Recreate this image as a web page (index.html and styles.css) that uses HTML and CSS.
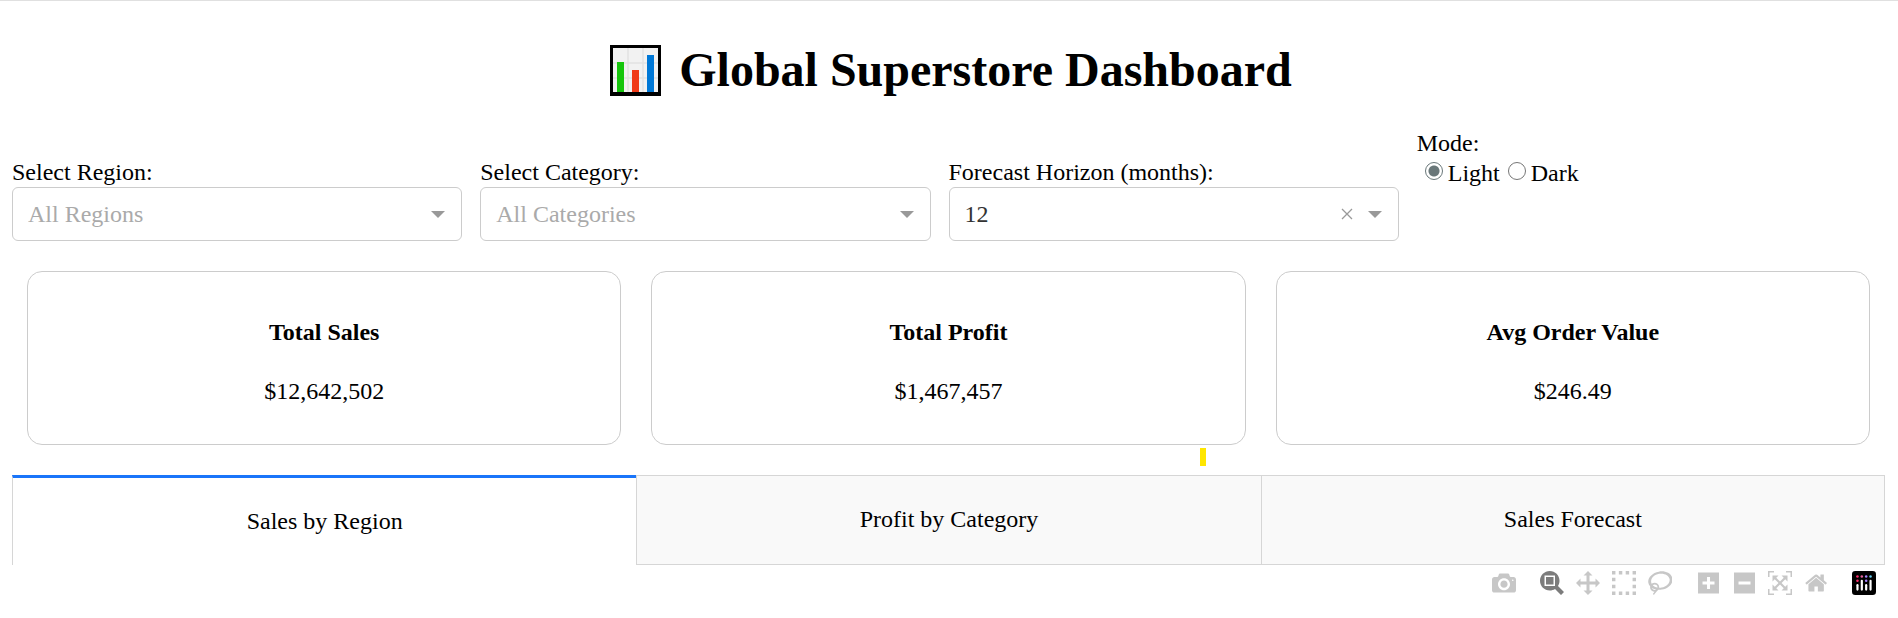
FILE: index.html
```html
<!DOCTYPE html>
<html lang="en">
<head>
<meta charset="utf-8">
<meta name="viewport" content="width=device-width, initial-scale=1">
<title>Global Superstore Dashboard</title>
<link rel="stylesheet" href="styles.css">
</head>
<body>
<main class="page">
  <h1 class="title">
    <svg class="title-icon" viewBox="0 0 51 51" aria-hidden="true">
      <rect width="51" height="51" fill="#000"/>
      <rect x="3" y="3" width="45" height="44" fill="#f2f2f2"/>
      <path d="M18 3V47M33 3V47M3 18H48M3 33H48" stroke="#e2e2e2" stroke-width="1.5"/>
      <rect x="7" y="17" width="7" height="30" fill="#16c60c"/>
      <rect x="22" y="25" width="7" height="22" fill="#f03a17"/>
      <rect x="37" y="10" width="7" height="37" fill="#0078d7"/>
    </svg>
    <span>Global Superstore Dashboard</span>
  </h1>

  <form class="filters">
    <div class="field">
      <label for="region">Select Region:</label>
      <div class="select-box">
        <select id="region" class="placeholder"><option>All Regions</option></select>
        <svg class="arrow" viewBox="0 0 14 7" aria-hidden="true"><path d="M0 0H14L7 7Z"/></svg>
      </div>
    </div>
    <div class="field">
      <label for="category">Select Category:</label>
      <div class="select-box">
        <select id="category" class="placeholder"><option>All Categories</option></select>
        <svg class="arrow" viewBox="0 0 14 7" aria-hidden="true"><path d="M0 0H14L7 7Z"/></svg>
      </div>
    </div>
    <div class="field">
      <label for="horizon">Forecast Horizon (months):</label>
      <div class="select-box">
        <select id="horizon"><option>12</option></select>
        <button type="button" class="clear" aria-label="Clear value"><svg viewBox="0 0 12 12" aria-hidden="true"><path d="M1 1L11 11M11 1L1 11"/></svg></button>
        <svg class="arrow" viewBox="0 0 14 7" aria-hidden="true"><path d="M0 0H14L7 7Z"/></svg>
      </div>
    </div>
    <fieldset class="field mode">
      <legend>Mode:</legend>
      <div class="radios">
        <label><input type="radio" name="mode" checked>Light</label>
        <label><input type="radio" name="mode">Dark</label>
      </div>
    </fieldset>
  </form>

  <section class="cards">
    <article class="card"><h2>Total Sales</h2><p>$12,642,502</p></article>
    <article class="card"><h2>Total Profit</h2><p>$1,467,457</p><span class="marker"></span></article>
    <article class="card"><h2>Avg Order Value</h2><p>$246.49</p></article>
  </section>

  <div class="tabs" role="tablist">
    <button type="button" class="tab selected" role="tab" aria-selected="true">Sales by Region</button>
    <button type="button" class="tab" role="tab" aria-selected="false">Profit by Category</button>
    <button type="button" class="tab" role="tab" aria-selected="false">Sales Forecast</button>
  </div>

  <div class="modebar">
    <div class="group">
      <button type="button" aria-label="Download plot as a png"><svg viewBox="0 0 1000 1000"><path transform="matrix(1 0 0 -1 0 850)" d="m500 450c-83 0-150-67-150-150 0-83 67-150 150-150 83 0 150 67 150 150 0 83-67 150-150 150z m400 150h-120c-16 0-34 13-39 29l-31 93c-6 15-23 28-40 28h-340c-16 0-34-13-39-28l-31-94c-6-15-23-28-40-28h-120c-55 0-100-45-100-100v-450c0-55 45-100 100-100h800c55 0 100 45 100 100v450c0 55-45 100-100 100z m-400-550c-138 0-250 112-250 250 0 138 112 250 250 250 138 0 250-112 250-250 0-138-112-250-250-250z m365 380c-19 0-35 16-35 35 0 19 16 35 35 35 19 0 35-16 35-35 0-19-16-35-35-35z"/></svg></button>
    </div>
    <div class="group">
      <button type="button" class="active" aria-label="Zoom"><svg viewBox="0 0 1000 1000"><path transform="matrix(1 0 0 -1 0 850)" d="m1000-25l-250 251c40 63 63 138 63 218 0 224-182 406-407 406-224 0-406-182-406-406s183-406 407-406c80 0 155 22 218 62l250-250 125 125z m-812 250l0 438 437 0 0-438-437 0z m62 375l313 0 0-312-313 0 0 312z"/></svg></button>
      <button type="button" aria-label="Pan"><svg viewBox="0 0 1000 1000"><path transform="matrix(1 0 0 -1 0 850)" d="m1000 350l-187 188 0-125-250 0 0 250 125 0-188 187-187-187 125 0 0-250-250 0 0 125-188-188 186-187 0 125 252 0 0-250-125 0 187-188 188 188-125 0 0 250 250 0 0-126 187 188z"/></svg></button>
      <button type="button" aria-label="Box Select"><svg viewBox="0 0 1000 1000"><path transform="matrix(1 0 0 -1 0 850)" d="m0 850l0-143 143 0 0 143-143 0z m286 0l0-143 143 0 0 143-143 0z m285 0l0-143 143 0 0 143-143 0z m286 0l0-143 143 0 0 143-143 0z m-857-286l0-143 143 0 0 143-143 0z m857 0l0-143 143 0 0 143-143 0z m-857-285l0-143 143 0 0 143-143 0z m857 0l0-143 143 0 0 143-143 0z m-857-286l0-143 143 0 0 143-143 0z m286 0l0-143 143 0 0 143-143 0z m285 0l0-143 143 0 0 143-143 0z m286 0l0-143 143 0 0 143-143 0z"/></svg></button>
      <button type="button" aria-label="Lasso Select"><svg viewBox="0 0 1031 1000"><path transform="matrix(1 0 0 -1 0 850)" d="m1018 538c-36 207-290 336-568 286-277-48-473-256-436-463 10-57 36-108 76-151-13-66 11-137 68-183 34-28 75-41 114-42l-55-70 0 0c-2-1-3-2-4-3-10-14-8-34 5-45 14-11 34-8 45 4 1 1 2 3 2 5l0 0 113 140c16 11 31 24 45 40 4 3 6 7 8 11 48-3 100 0 151 9 278 48 473 255 436 462z m-624-379c-80 14-149 48-197 96 42 42 109 47 156 9 33-26 47-66 41-105z m-187-74c-19 16-33 37-39 60 50-32 109-55 174-68-42-25-95-24-135 8z m360 75c-34-7-69-9-102-8 8 62-16 128-68 170-73 59-175 54-244-5-9 20-16 40-20 61-28 159 121 317 333 354s407-60 434-217c28-159-121-318-333-355z"/></svg></button>
    </div>
    <div class="group">
      <button type="button" aria-label="Zoom in"><svg viewBox="0 0 875 1000"><path transform="matrix(1 0 0 -1 0 850)" d="m1 787l0-875 875 0 0 875-875 0z m687-500l-187 0 0-187-125 0 0 187-188 0 0 125 188 0 0 187 125 0 0-187 187 0 0-125z"/></svg></button>
      <button type="button" aria-label="Zoom out"><svg viewBox="0 0 875 1000"><path transform="matrix(1 0 0 -1 0 850)" d="m0 788l0-876 875 0 0 876-875 0z m688-500l-500 0 0 125 500 0 0-125z"/></svg></button>
      <button type="button" aria-label="Autoscale"><svg viewBox="0 0 1000 1000"><path transform="matrix(1 0 0 -1 0 850)" d="m250 850l-187 0-63 0 0-62 0-188 63 0 0 188 187 0 0 62z m688 0l-188 0 0-62 188 0 0-188 62 0 0 188 0 62-62 0z m-875-938l0 188-63 0 0-188 0-62 63 0 187 0 0 62-187 0z m875 188l0-188-188 0 0-62 188 0 62 0 0 62 0 188-62 0z m-125 188l-1 0-93-94-156 156 156 156 92-93 2 0 0 250-250 0 0-2 93-92-156-156-156 156 94 92 0 2-250 0 0-250 0 0 93 93 157-156-157-156-93 94 0 0 0-250 250 0 0 0-94 93 156 157 156-157-93-93 0 0 250 0 0 250z"/></svg></button>
      <button type="button" aria-label="Reset axes"><svg viewBox="0 0 929 1000"><path transform="matrix(1 0 0 -1 0 850)" d="m786 296v-267q0-15-11-26t-25-10h-214v214h-143v-214h-214q-15 0-25 10t-11 26v267q0 1 0 2t0 2l321 264 321-264q1-1 1-4z m124 39l-34-41q-5-5-12-6h-2q-7 0-12 3l-386 322-386-322q-7-4-13-4-7 2-12 7l-35 41q-4 5-3 13t6 12l401 334q18 15 42 15t43-15l136-114v109q0 8 5 13t13 5h107q8 0 13-5t5-13v-227l122-102q5-5 6-12t-4-13z"/></svg></button>
    </div>
    <div class="group">
      <a href="#" class="logo" aria-label="Produced with Plotly"><svg viewBox="0 0 132 132">
        <rect width="132" height="132" rx="18" fill="#000"/>
        <g fill="#fff"><rect x="24" y="72" width="12" height="36" rx="6"/><rect x="48" y="48" width="12" height="60" rx="6"/><rect x="72" y="72" width="12" height="36" rx="6"/><rect x="96" y="48" width="12" height="60" rx="6"/></g>
        <circle cx="30" cy="30" r="7" fill="#ff2c6d"/><circle cx="30" cy="54" r="7" fill="#ff2c6d"/><circle cx="54" cy="30" r="7" fill="#e763a0"/><circle cx="78" cy="30" r="7" fill="#a883ff"/><circle cx="78" cy="54" r="7" fill="#a883ff"/><circle cx="102" cy="30" r="7" fill="#66ccee"/>
      </svg></a>
    </div>
  </div>
</main>
</body>
</html>
```

FILE: styles.css
```css
* {
  box-sizing: border-box;
}

body {
  margin: 0;
  border-top: 1px solid #e0e0e0;
  background: #fff;
  color: #000;
  font: 24px/30px "Liberation Serif", "Times New Roman", serif;
}

button,
select {
  font: inherit;
  color: inherit;
}

.page {
  padding: 35px 13px 0 12px;
}

.title {
  display: flex;
  justify-content: center;
  align-items: center;
  gap: 18px;
  margin: 0 0 24px;
  padding-left: 5px;
  font-size: 48px;
  line-height: 68px;
}

.title-icon {
  width: 51px;
  height: 51px;
}

.filters {
  display: grid;
  grid-template-columns: repeat(4, 1fr);
  align-items: end;
}

.field {
  display: flex;
  flex-direction: column;
  margin-right: 18px;
}

.select-box {
  display: flex;
  align-items: center;
  position: relative;
  height: 54px;
  border: 1px solid #ccc;
  border-radius: 6px;
}

.select-box select {
  flex: 1;
  height: 100%;
  padding: 0 60px 0 15px;
  border: 0;
  background: none;
  appearance: none;
  color: #333;
}

.select-box .placeholder {
  color: #aaa;
}

.arrow {
  position: absolute;
  right: 16px;
  width: 14px;
  height: 7px;
  fill: #999;
  pointer-events: none;
}

.clear {
  display: flex;
  position: absolute;
  right: 45px;
  padding: 0;
  border: 0;
  background: none;
}

.clear svg {
  width: 12px;
  height: 12px;
  stroke: #999;
  stroke-width: 1.3;
}

.mode {
  margin: 0;
  padding: 0 0 53px;
  border: 0;
}

.mode legend {
  padding: 0;
}

.radios {
  display: flex;
  gap: 8px;
  padding-left: 8px;
}

.radios label {
  display: flex;
  gap: 5px;
}

.radios input {
  appearance: none;
  width: 18px;
  height: 18px;
  margin: 4px 0 0;
  border: 1px solid #767676;
  border-radius: 50%;
}

.radios input:checked {
  border-color: #697779;
  background: radial-gradient(circle, #697779 5px, transparent 6px);
}

.cards {
  display: grid;
  grid-template-columns: repeat(3, 1fr);
  gap: 30px;
  padding: 30px 15px;
}

.card {
  position: relative;
  padding: 45px 15px 38px;
  border: 1px solid #ccc;
  border-radius: 15px;
  text-align: center;
}

.card h2 {
  margin: 0 0 29px;
  font-size: 24px;
  line-height: 30px;
}

.card p {
  margin: 0;
}

.marker {
  position: absolute;
  right: 39px;
  bottom: -22px;
  width: 6px;
  height: 18px;
  background: #ffe600;
}

.tabs {
  display: grid;
  grid-template-columns: repeat(3, 1fr);
}

.tab {
  padding: 28px 30px 30px;
  border: 1px solid #d6d6d6;
  border-right: 0;
  background: #f9f9f9;
}

.tab:last-child {
  border-right: 1px solid #d6d6d6;
}

.tab.selected {
  padding-bottom: 29px;
  border-top: 3px solid #1975fa;
  border-bottom: 0;
  background: #fff;
}

.modebar {
  display: flex;
  justify-content: flex-end;
  gap: 12px;
  padding: 6px 3px;
}

.group {
  display: flex;
}

.modebar button,
.logo {
  display: flex;
  justify-content: center;
  width: 36px;
  padding: 0;
  border: 0;
  background: none;
  fill: #c7c7c7;
}

.modebar button.active {
  fill: #7c7c7c;
}

.modebar svg {
  height: 24px;
}
```
